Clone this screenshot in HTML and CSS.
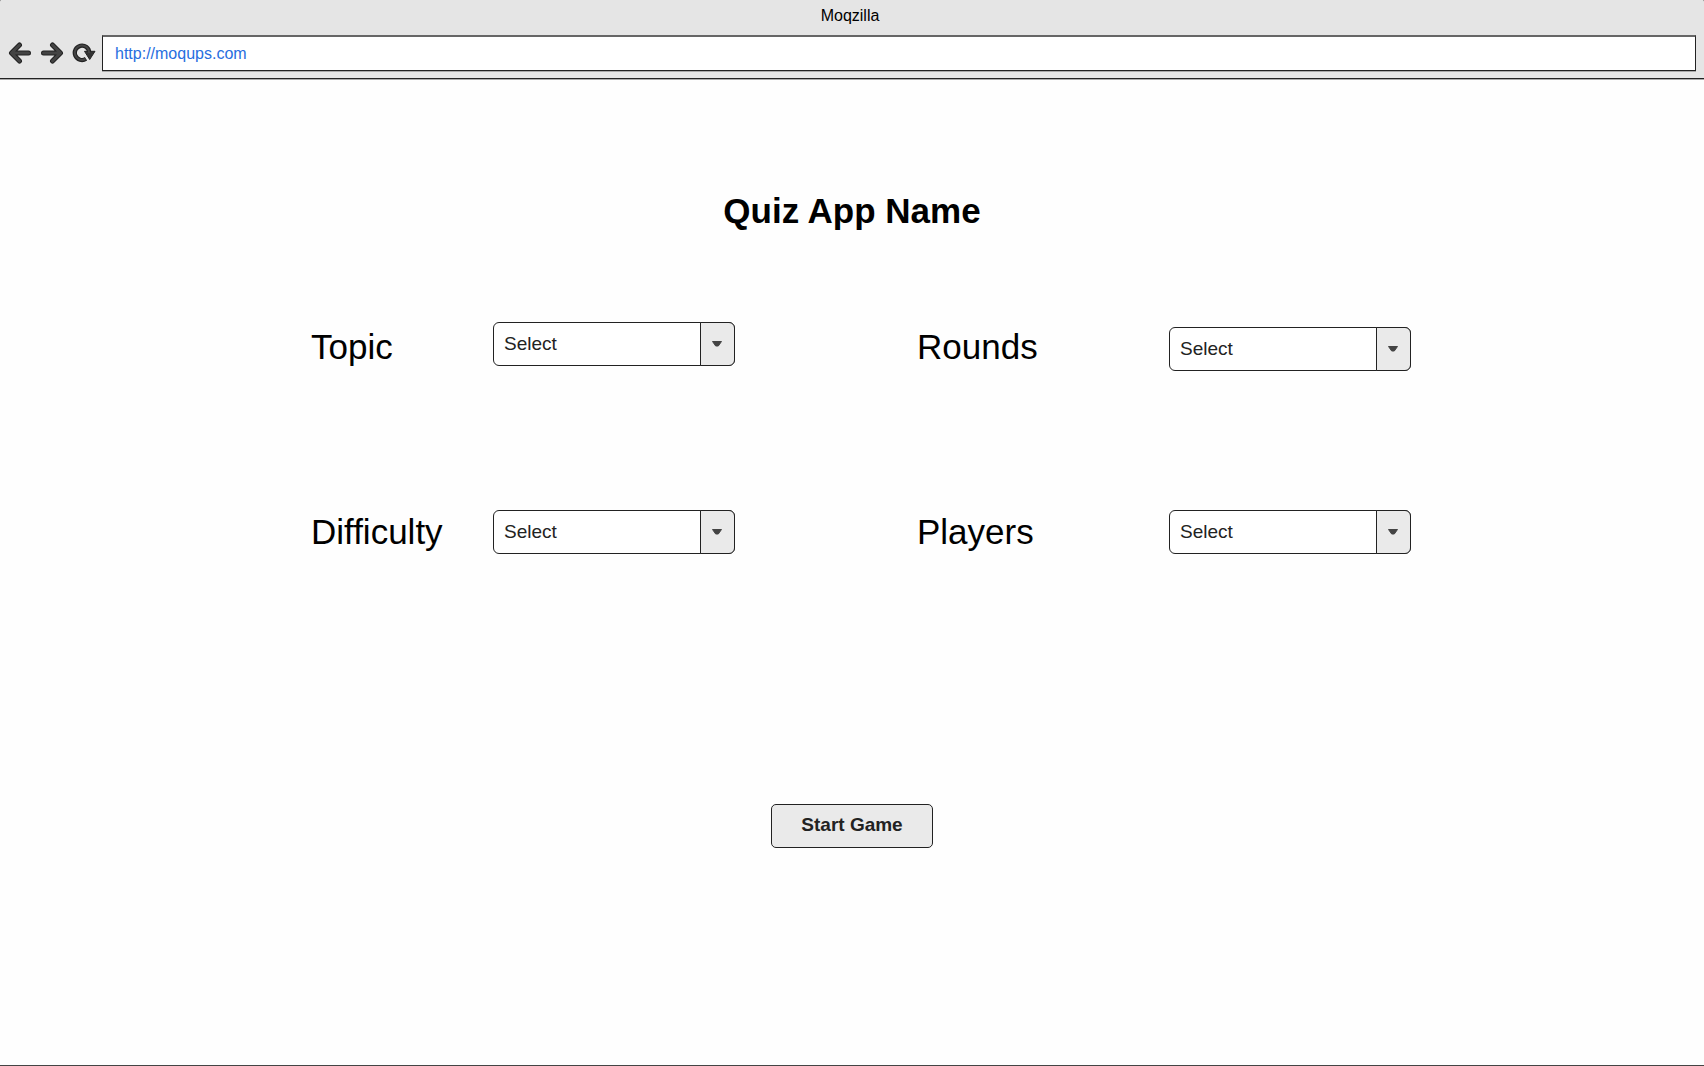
FILE: index.html
```html
<!DOCTYPE html>
<html lang="en">
<head>
<meta charset="utf-8">
<meta name="viewport" content="width=device-width, initial-scale=1">
<title>Moqzilla</title>
<link rel="stylesheet" href="styles.css">
</head>
<body>
<div class="window">
  <header class="chrome">
    <div class="window-title">Moqzilla</div>
    <div class="toolbar">
      <button class="nav-button" type="button" aria-label="Back">
        <svg width="24" height="24" viewBox="0 0 24 24" fill="none" stroke-linecap="round" stroke-linejoin="round">
          <path d="M11.500 4 3.500 12l8 8M4 12h16.500" stroke="#222" stroke-width="5"/>
          <path d="M11.500 4 3.500 12l8 8M4 12h16.500" stroke="#444" stroke-width="3"/>
        </svg>
      </button>
      <button class="nav-button" type="button" aria-label="Forward">
        <svg width="24" height="24" viewBox="0 0 24 24" fill="none" stroke-linecap="round" stroke-linejoin="round">
          <path d="M12.500 4l8 8-8 8M20 12H3.500" stroke="#222" stroke-width="5"/>
          <path d="M12.500 4l8 8-8 8M20 12H3.500" stroke="#444" stroke-width="3"/>
        </svg>
      </button>
      <button class="nav-button" type="button" aria-label="Reload">
        <svg width="24" height="24" viewBox="0 0 24 24" fill="none">
          <path d="M14 17.800A7.200 7.200 0 1 1 17.200 11.500" stroke="#222" stroke-width="4.300"/>
          <path d="M12.500 10.300h10.500L17.700 18.500z" fill="#333" stroke="#222" stroke-width="1" stroke-linejoin="round"/>
          <path d="M13.400 18A7.200 7.200 0 1 1 17.200 12" stroke="#444" stroke-width="2"/>
        </svg>
      </button>
      <input class="address" type="text" aria-label="Address" value="http://moqups.com">
    </div>
  </header>

  <main class="page">
    <h1 class="title">Quiz App Name</h1>
    <form class="setup">
      <div class="options">
        <div class="row">
          <div class="field">
            <label class="label" for="topic">Topic</label>
            <div class="dropdown dropdown-top">
              <select class="select" id="topic"><option>Select</option></select>
              <span class="arrow"><svg width="12" height="8" viewBox="0 0 12 8"><path d="M1.500 1.500h9L7.300 6H4.700z" fill="#444" stroke="#444" stroke-linejoin="round"/></svg></span>
            </div>
          </div>
          <div class="field field-wide">
            <label class="label" for="rounds">Rounds</label>
            <div class="dropdown dropdown-bottom">
              <select class="select" id="rounds"><option>Select</option></select>
              <span class="arrow"><svg width="12" height="8" viewBox="0 0 12 8"><path d="M1.500 1.500h9L7.300 6H4.700z" fill="#444" stroke="#444" stroke-linejoin="round"/></svg></span>
            </div>
          </div>
        </div>
        <div class="row">
          <div class="field">
            <label class="label" for="difficulty">Difficulty</label>
            <div class="dropdown">
              <select class="select" id="difficulty"><option>Select</option></select>
              <span class="arrow"><svg width="12" height="8" viewBox="0 0 12 8"><path d="M1.500 1.500h9L7.300 6H4.700z" fill="#444" stroke="#444" stroke-linejoin="round"/></svg></span>
            </div>
          </div>
          <div class="field field-wide">
            <label class="label" for="players">Players</label>
            <div class="dropdown">
              <select class="select" id="players"><option>Select</option></select>
              <span class="arrow"><svg width="12" height="8" viewBox="0 0 12 8"><path d="M1.500 1.500h9L7.300 6H4.700z" fill="#444" stroke="#444" stroke-linejoin="round"/></svg></span>
            </div>
          </div>
        </div>
      </div>
      <button class="start" type="submit">Start Game</button>
    </form>
  </main>
</div>
</body>
</html>
```

FILE: styles.css
```css
* {
  box-sizing: border-box;
}

body {
  margin: 0;
  background: #444;
  color: #000;
  font-family: "Liberation Sans", Arial, Helvetica, sans-serif;
}

.window {
  display: flex;
  flex-direction: column;
  min-height: 100vh;
  border-bottom: 1px solid #444;
  border-radius: 2px 2px 0 0;
  background: #fefefe;
  overflow: hidden;
}

/* Browser frame */
.chrome {
  padding: 4px 8px 7px;
  border-bottom: 1px solid #222;
  background: #e5e5e5;
  box-shadow: 0 1px #aaa;
}

.window-title {
  padding: 0 4px 7px 0;
  font-size: 16px;
  line-height: 24px;
  text-align: center;
}

.toolbar {
  display: flex;
  align-items: center;
  gap: 8px;
}

.nav-button {
  display: flex;
  padding: 0;
  border: 0;
  background: none;
}

.address {
  flex: 1;
  min-width: 0;
  height: 36px;
  margin-left: -2px;
  padding: 0 12px;
  border: 1px solid #222;
  border-top: 2px solid #666;
  border-radius: 0;
  background: #fff;
  box-shadow: 0 1px #aaa;
  color: #276ee0;
  font: 16px "Liberation Sans", Arial, Helvetica, sans-serif;
}

/* Quiz setup */
.page {
  display: flex;
  flex: 1;
  flex-direction: column;
  align-items: center;
  padding: 112px 24px;
}

.title {
  margin: 0 0 91px;
  font-size: 35px;
  line-height: 40px;
}

.setup {
  display: flex;
  flex-direction: column;
  align-items: center;
  gap: 250px;
  width: 100%;
}

.options {
  display: flex;
  flex-direction: column;
  gap: 139px;
  width: 100%;
  max-width: 1118px;
  padding-left: 18px;
}

.row {
  display: flex;
  justify-content: space-between;
  gap: 24px;
}

.field {
  display: grid;
  grid-template-columns: 182px 242px;
  align-items: center;
}

.field-wide {
  grid-template-columns: 252px 242px;
}

.label {
  font-size: 35px;
  line-height: 40px;
}

.dropdown {
  display: grid;
}

.dropdown-top {
  align-self: start;
  margin-bottom: 5px;
}

.dropdown-bottom {
  align-self: end;
  margin-top: 5px;
}

.select {
  grid-area: 1 / 1;
  height: 44px;
  padding: 0 40px 2px 10px;
  border: 1px solid #222;
  border-radius: 6px;
  appearance: none;
  background: #fff;
  color: #222;
  font: 19px "Liberation Sans", Arial, Helvetica, sans-serif;
}

.arrow {
  display: flex;
  grid-area: 1 / 1;
  align-items: center;
  justify-content: center;
  justify-self: end;
  width: 35px;
  padding-right: 2px;
  border: 1px solid #222;
  border-radius: 0 6px 6px 0;
  background: #eaeaea;
  pointer-events: none;
}

.start {
  width: 162px;
  height: 44px;
  padding: 0 0 2px;
  border: 1px solid #222;
  border-radius: 5px;
  background: #eaeaea;
  color: #222;
  font: bold 19px "Liberation Sans", Arial, Helvetica, sans-serif;
}
```
